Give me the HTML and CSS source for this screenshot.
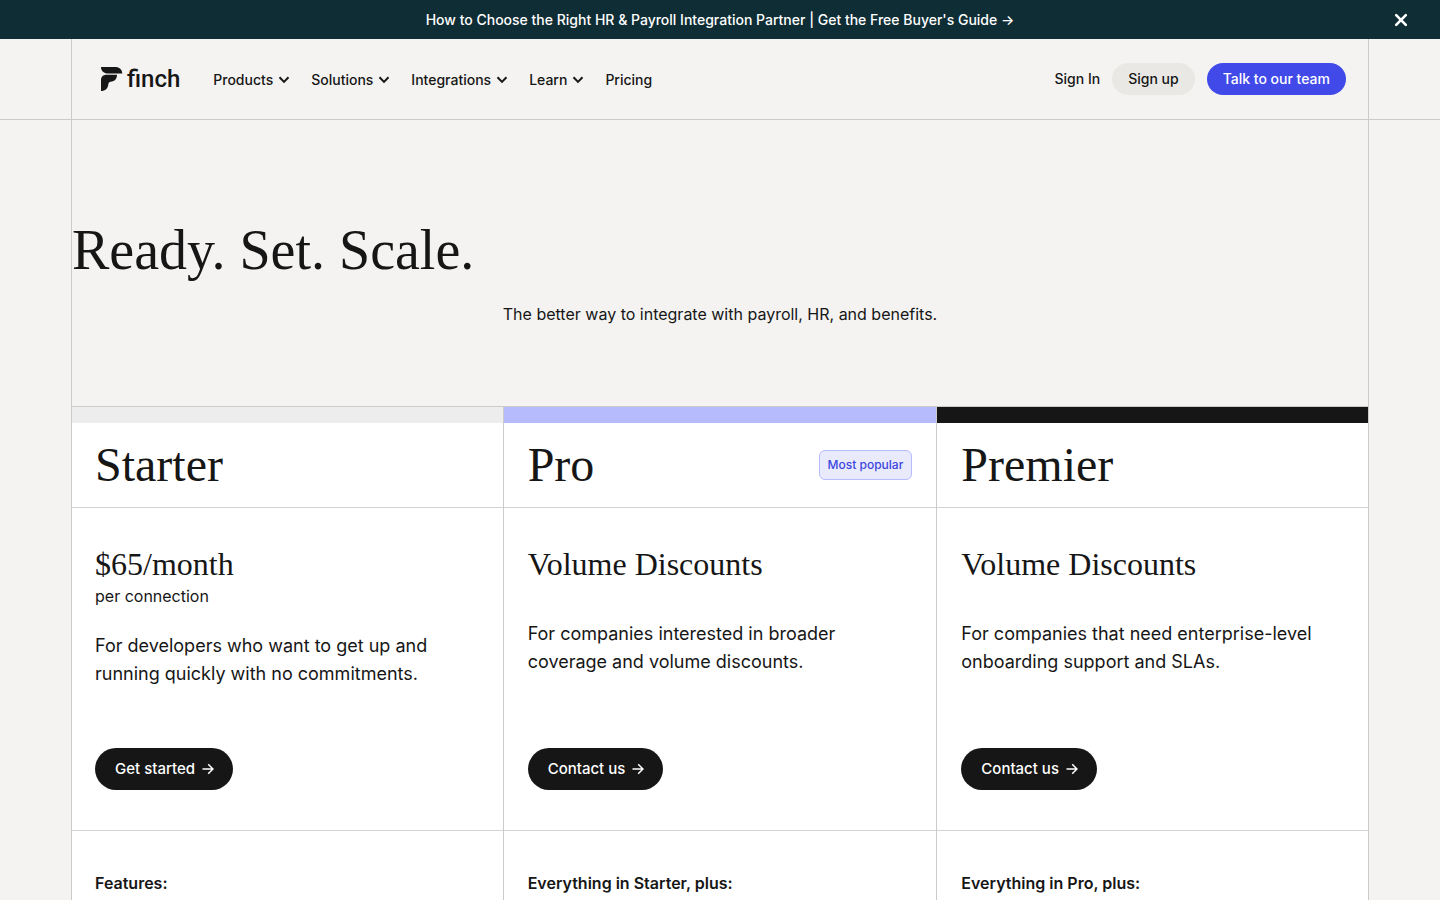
FILE: index.html
```html
<!DOCTYPE html>
<html lang="en">
<head>
<meta charset="utf-8">
<meta name="viewport" content="width=device-width, initial-scale=1">
<title>Finch Pricing</title>
<link rel="stylesheet" href="styles.css">
</head>
<body>
<svg class="sprite" aria-hidden="true">
  <symbol id="chevron" viewBox="0 0 12 8"><path d="M1.5 1.3 6 5.900l4.500-4.600" fill="none" stroke="currentColor" stroke-width="2"/></symbol>
  <symbol id="arrow" viewBox="0 0 12 12"><path d="M.5 6h10.300M6.200 1.200 11 6l-4.800 4.800" fill="none" stroke="currentColor" stroke-width="1.5"/></symbol>
</svg>
<div class="banner">
  <a class="banner-link" href="#">How to Choose the Right HR &amp; Payroll Integration Partner | Get the Free Buyer's Guide →</a>
  <button class="banner-close" type="button" aria-label="Close">
    <svg width="14" height="14" viewBox="0 0 14 14"><path d="M2.200 2.200l9.600 9.600M11.800 2.200l-9.600 9.600" stroke="currentColor" stroke-width="2.600" stroke-linecap="round"/></svg>
  </button>
</div>
<header class="header">
  <div class="frame header-inner">
    <a class="logo" href="#">
      <svg width="22" height="24" viewBox="0 0 22 24"><path d="M0 0h14C18.500 0 21 2.500 21.300 6.500H7C3 6.500 0 4.300 0 0Z" fill="currentColor"/><path d="M5.500 7.800H16c0 3.700-1.800 6.200-4.800 6.600-2.700.3-3.600.9-3.800 2.600C7 21.500 4.300 24 0 24V13.300c0-3.300 2-5.500 5.500-5.500Z" fill="currentColor"/></svg>
      <span class="wordmark">finch</span>
    </a>
    <nav class="nav">
      <button class="nav-item" type="button">Products <svg width="12" height="8"><use href="#chevron"/></svg></button>
      <button class="nav-item" type="button">Solutions <svg width="12" height="8"><use href="#chevron"/></svg></button>
      <button class="nav-item" type="button">Integrations <svg width="12" height="8"><use href="#chevron"/></svg></button>
      <button class="nav-item" type="button">Learn <svg width="12" height="8"><use href="#chevron"/></svg></button>
      <a class="nav-item" href="#">Pricing</a>
    </nav>
    <div class="actions">
      <a class="sign-in" href="#">Sign In</a>
      <a class="pill pill-light" href="#">Sign up</a>
      <a class="pill pill-blue" href="#">Talk to our team</a>
    </div>
  </div>
</header>
<main class="main">
  <section class="frame hero">
    <h1 class="hero-title">Ready. Set. Scale.</h1>
    <p class="hero-text">The better way to integrate with payroll, HR, and benefits.</p>
  </section>
  <section class="plans">
    <article class="plan plan-first">
      <div class="bar bar-starter"></div>
      <div class="plan-head"><h2 class="plan-name">Starter</h2></div>
      <div class="plan-body">
        <h3 class="price">$65/month</h3>
        <p class="unit">per connection</p>
        <p class="plan-text">For developers who want to get up and running quickly with no commitments.</p>
        <a class="cta" href="#">Get started <svg width="12" height="12"><use href="#arrow"/></svg></a>
      </div>
      <div class="features"><h4 class="features-title">Features:</h4></div>
    </article>
    <article class="plan">
      <div class="bar bar-pro"></div>
      <div class="plan-head"><h2 class="plan-name">Pro</h2><span class="tag">Most popular</span></div>
      <div class="plan-body">
        <h3 class="price">Volume Discounts</h3>
        <p class="plan-text plan-text-spaced">For companies interested in broader coverage and volume discounts.</p>
        <a class="cta" href="#">Contact us <svg width="12" height="12"><use href="#arrow"/></svg></a>
      </div>
      <div class="features"><h4 class="features-title">Everything in Starter, plus:</h4></div>
    </article>
    <article class="plan plan-last">
      <div class="bar bar-premier"></div>
      <div class="plan-head"><h2 class="plan-name">Premier</h2></div>
      <div class="plan-body">
        <h3 class="price">Volume Discounts</h3>
        <p class="plan-text plan-text-spaced">For companies that need enterprise-level onboarding support and SLAs.</p>
        <a class="cta" href="#">Contact us <svg width="12" height="12"><use href="#arrow"/></svg></a>
      </div>
      <div class="features"><h4 class="features-title">Everything in Pro, plus:</h4></div>
    </article>
  </section>
</main>
</body>
</html>
```
FILE: styles.css
```css
* { box-sizing: border-box; }
html { height: 100%; overflow: hidden; }
body {
  margin: 0;
  min-height: 100%;
  display: flex;
  flex-direction: column;
  background: #f4f3f1;
  color: #161616;
  font-family: Inter, "Liberation Sans", sans-serif;
  font-size: 16px;
  line-height: 24px;
}
h1, h2, h3, h4, p { margin: 0; font-weight: 400; }
h1, h2, h3 { font-family: "Liberation Serif", serif; }
a { color: inherit; text-decoration: none; }
button { border: 0; background: none; color: inherit; font: inherit; padding: 0; cursor: pointer; }
.sprite { display: none; }

.banner {
  display: grid;
  grid-template-columns: 1fr auto 1fr;
  align-items: center;
  height: 39px;
  padding: 0 32px;
  background: #0f2d35;
  color: #fff;
}
.banner-link { grid-column: 2; font-size: 14px; font-weight: 500; line-height: 20px; }
.banner-close { justify-self: end; display: flex; }

.frame { margin: 0 71px; border: 0 solid #cbcbc9; border-width: 0 1px; }
.header { border-bottom: 1px solid #cbcbc9; }
.header-inner { display: flex; align-items: center; height: 80px; padding: 0 22px 0 29px; }
.logo { display: flex; align-items: center; gap: 4px; margin-right: 33px; }
.wordmark { font-family: Roboto, sans-serif; font-size: 24px; font-weight: 500; line-height: 24px; }
.nav { display: flex; gap: 21px; padding-top: 2px; }
.nav-item { display: flex; align-items: center; gap: 5px; font-size: 14px; font-weight: 500; line-height: 20px; }
.actions { display: flex; align-items: center; gap: 12px; margin-left: auto; font-size: 14px; font-weight: 500; line-height: 20px; }
.pill { padding: 6px 16px; border-radius: 16px; }
.pill-light { background: #e9e8e4; }
.pill-blue { background: #4149e8; color: #fff; }

.main { flex: 1; display: flex; flex-direction: column; }
.hero { padding: 96px 0 80px; }
.hero-title { font-size: 56px; line-height: 68px; }
.hero-text { margin-top: 18px; text-align: center; }

.plans {
  flex: 1;
  display: grid;
  grid-template-columns: repeat(3, 1fr);
  margin: 0 71px;
  border-top: 1px solid #cbcbc9;
  background: #fff;
}
.plan { --inset: 24px; display: flex; flex-direction: column; }
.plan-first { --inset: 23px; }
.plan-first, .plan-last { border: 0 solid #cbcbc9; border-width: 0 1px; }
.bar { height: 16px; }
.bar-starter { background: #ecedec; }
.bar-pro { background: #b6bbfe; }
.bar-premier { background: #161616; }
.plan-head {
  display: flex;
  align-items: center;
  justify-content: space-between;
  height: 85px;
  padding: 0 var(--inset);
  border-bottom: 1px solid #d3d3d3;
}
.plan-name { font-size: 48px; line-height: 56px; }
.tag {
  padding: 4px 8px;
  border: 1px solid #b6bbfe;
  border-radius: 6px;
  background: #e9eafc;
  color: #3d46dc;
  font-size: 12px;
  font-weight: 500;
  line-height: 20px;
}
.plan-body {
  display: flex;
  flex-direction: column;
  align-items: flex-start;
  min-height: 323px;
  padding: 36px var(--inset) 40px;
  border-bottom: 1px solid #d3d3d3;
}
.price { font-size: 32px; line-height: 40px; }
.plan-text { margin-top: 24px; max-width: 360px; font-size: 18px; line-height: 28px; }
.plan-text-spaced { margin-top: 36px; }
.cta {
  display: flex;
  align-items: center;
  gap: 7px;
  margin-top: auto;
  padding: 9px 19px 9px 20px;
  border-radius: 21px;
  background: #161616;
  color: #fff;
  font-size: 15px;
  font-weight: 500;
}
.features { padding: 40px var(--inset); }
.features-title { font-weight: 600; }
```
